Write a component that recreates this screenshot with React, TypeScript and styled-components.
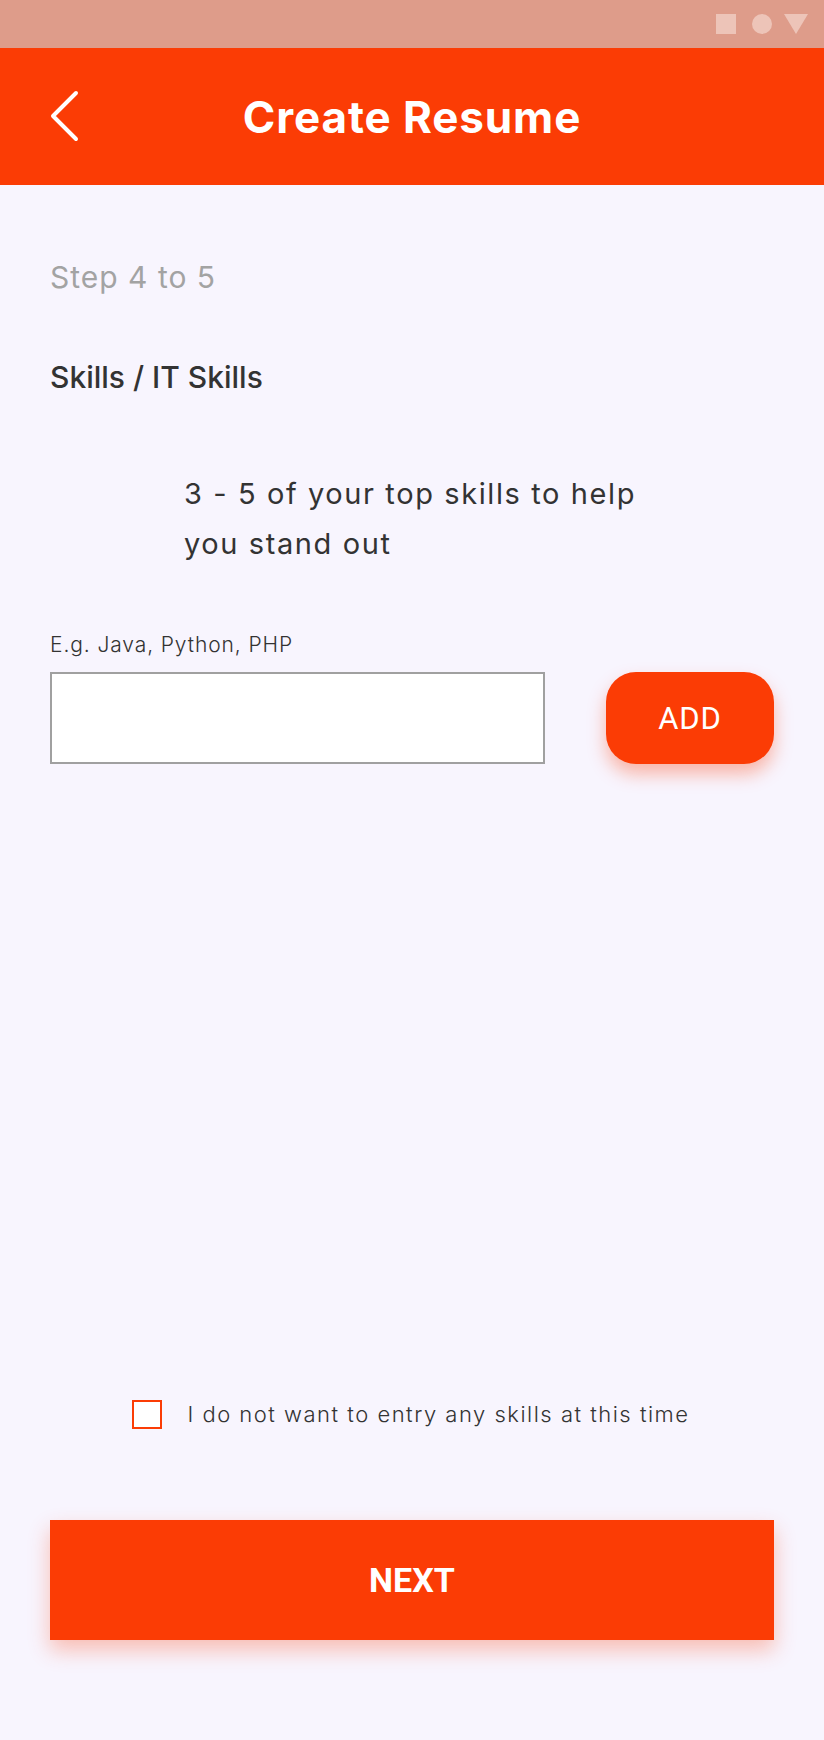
import React from "react";
import styled, { createGlobalStyle } from "styled-components";

const GlobalStyle = createGlobalStyle`
  * { box-sizing: border-box; }
  html, body { margin: 0; padding: 0; }
  body {
    background: #f8f5fe;
    font-family: Inter, "Noto Sans", sans-serif;
    color: #333333;
  }
`;

const Screen = styled.div`
  display: flex;
  flex-direction: column;
  width: 824px;
  height: 1740px;
  background: #f8f5fe;
`;

const StatusBar = styled.div`
  height: 48px;
  background: #de9c8a;
  display: flex;
  align-items: center;
  justify-content: flex-end;
  gap: 12px;
  padding-right: 16px;
`;

const StatusIcon = styled.svg<{ $gapRight?: number }>`
  width: 20px;
  height: 20px;
  fill: #edc4b8;
  margin-right: ${(p) => p.$gapRight ?? 0}px;
`;

const TriIcon = styled.svg`
  width: 24px;
  height: 20px;
  fill: #edc4b8;
`;

const Header = styled.header`
  height: 137px;
  background: #fb3c05;
  position: relative;
  display: flex;
  align-items: center;
  justify-content: center;
`;

const BackButton = styled.button`
  position: absolute;
  left: 44px;
  top: 40px;
  width: 40px;
  height: 56px;
  border: none;
  background: transparent;
  padding: 0;
  display: flex;
  align-items: center;
  justify-content: center;
  cursor: pointer;
`;

const Title = styled.h1`
  margin: 0;
  font-family: Inter, "Noto Sans", sans-serif;
  font-weight: 700;
  font-size: 44px;
  color: #ffffff;
  letter-spacing: 0.9px;
`;

const Content = styled.main`
  flex: 1;
  display: flex;
  flex-direction: column;
  padding: 0 50px 100px;
`;

const StepText = styled.div`
  margin-top: 74px;
  font-size: 30px;
  line-height: 36px;
  font-weight: 400;
  letter-spacing: 1px;
  color: #a3a3a3;
`;

const SectionTitle = styled.h2`
  margin: 64px 0 0;
  font-size: 30px;
  line-height: 36px;
  font-weight: 500;
  color: #333333;
`;

const Lead = styled.p`
  margin: 74px 0 0;
  padding-left: 134px;
  width: 640px;
  font-size: 29px;
  line-height: 50px;
  font-weight: 400;
  letter-spacing: 1.6px;
  color: #333333;
`;

const FieldLabel = styled.label`
  display: block;
  margin-top: 64px;
  font-size: 21px;
  line-height: 24px;
  font-weight: 300;
  letter-spacing: 0.9px;
  color: #333333;
`;

const InputRow = styled.div`
  display: flex;
  align-items: stretch;
  justify-content: space-between;
  margin-top: 15px;
  height: 92px;
`;

const TextInput = styled.input`
  width: 495px;
  height: 100%;
  border: 2px solid #a0a0a0;
  background: #ffffff;
  outline: none;
  font-size: 22px;
  padding: 0 16px;
`;

const AddButton = styled.button`
  width: 168px;
  height: 92px;
  border: none;
  border-radius: 30px;
  background: #fb3c05;
  color: #ffffff;
  font-family: Roboto, "Liberation Sans", sans-serif;
  font-size: 31px;
  font-weight: 400;
  letter-spacing: 0.8px;
  box-shadow: 0 10px 18px rgba(251, 60, 5, 0.35);
  cursor: pointer;
`;

const Spacer = styled.div`
  flex: 1;
`;

const CheckRow = styled.label`
  display: flex;
  align-items: center;
  justify-content: center;
  gap: 25px;
  margin-right: 2px;
  cursor: pointer;
`;

const CheckBox = styled.span`
  width: 30px;
  height: 29px;
  border: 2px solid #fb3c05;
  background: #ffffff;
  flex-shrink: 0;
`;

const CheckText = styled.span`
  font-size: 22px;
  line-height: 29px;
  font-weight: 300;
  letter-spacing: 1.5px;
  color: #333333;
`;

const NextButton = styled.button`
  margin-top: 91px;
  width: 100%;
  height: 120px;
  border: none;
  background: #fb3c05;
  color: #ffffff;
  font-family: Roboto, "Liberation Sans", sans-serif;
  font-size: 34px;
  font-weight: 700;
  box-shadow: 0 10px 20px rgba(251, 60, 5, 0.3);
  cursor: pointer;
`;

export default function App() {
  return (
    <>
      <GlobalStyle />
      <Screen>
        <StatusBar>
          <StatusIcon viewBox="0 0 20 20" $gapRight={4}>
            <rect x="0" y="0" width="20" height="20" />
          </StatusIcon>
          <StatusIcon viewBox="0 0 20 20">
            <circle cx="10" cy="10" r="10" />
          </StatusIcon>
          <TriIcon viewBox="0 0 24 20">
            <polygon points="0,0 24,0 12,20" />
          </TriIcon>
        </StatusBar>
        <Header>
          <BackButton aria-label="Back">
            <svg width="32" height="52" viewBox="0 0 32 52" fill="none">
              <polyline
                points="28,3 5,26 28,49"
                stroke="#ffffff"
                strokeWidth="4"
                strokeLinecap="round"
                strokeLinejoin="round"
              />
            </svg>
          </BackButton>
          <Title>Create Resume</Title>
        </Header>
        <Content>
          <StepText>Step 4 to 5</StepText>
          <SectionTitle>Skills / IT Skills</SectionTitle>
          <Lead>3 - 5 of your top skills to help you stand out</Lead>
          <FieldLabel htmlFor="skill">E.g. Java, Python, PHP</FieldLabel>
          <InputRow>
            <TextInput id="skill" type="text" />
            <AddButton>ADD</AddButton>
          </InputRow>
          <Spacer />
          <CheckRow>
            <CheckBox />
            <CheckText>I do not want to entry any skills at this time</CheckText>
          </CheckRow>
          <NextButton>NEXT</NextButton>
        </Content>
      </Screen>
    </>
  );
}
